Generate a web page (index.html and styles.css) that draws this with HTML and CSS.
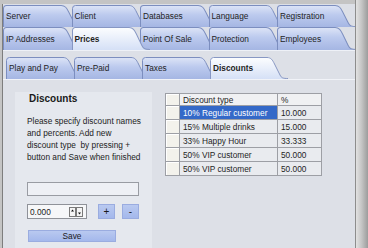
FILE: index.html
```html
<!DOCTYPE html>
<html>
<head>
<meta charset="utf-8">
<title>Prices - Discounts</title>
<link rel="stylesheet" href="styles.css">
</head>
<body>
<div class="win">
  <div class="frame">
    <div class="tabrow r1">
      <div class="tab">Server</div>
      <div class="tab">Client</div>
      <div class="tab">Databases</div>
      <div class="tab">Language</div>
      <div class="tab">Registration</div>
    </div>
    <div class="tabrow r2">
      <div class="tab">IP Addresses</div>
      <div class="tab sel">Prices</div>
      <div class="tab">Point Of Sale</div>
      <div class="tab">Protection</div>
      <div class="tab">Employees</div>
    </div>
    <div class="page">
      <div class="tabrow sub">
        <div class="tab">Play and Pay</div>
        <div class="tab">Pre-Paid</div>
        <div class="tab">Taxes</div>
        <div class="tab sel">Discounts</div>
      </div>
      <div class="inner">
        <div class="panel">
          <div class="ptitle">Discounts</div>
          <p class="desc">Please specify discount names<br>and percents. Add new<br>discount type&nbsp; by pressing +<br>button and Save when finished</p>
          <div class="field"></div>
          <div class="ctrls">
            <div class="spin">
              <span class="val">0.000</span>
              <span class="arrows">
                <svg width="15" height="10" viewBox="0 0 15 10"><rect x="0.5" y="0.5" width="6" height="9" fill="#f4f4f4" stroke="#7a7a7a"/><rect x="7.5" y="0.5" width="6" height="9" fill="#f4f4f4" stroke="#7a7a7a"/><path d="M2 4.5h3L3.5 2.5z" fill="#111"/><path d="M9 5.5h3L10.5 7.5z" fill="#111"/></svg>
              </span>
            </div>
            <div class="btn sq plus">+</div>
            <div class="btn sq minus">-</div>
          </div>
          <div class="btn save">Save</div>
        </div>
        <table class="grid">
          <colgroup><col class="c0"><col class="c1"><col class="c2"></colgroup>
          <thead>
            <tr><th class="rh"></th><th>Discount type</th><th>%</th></tr>
          </thead>
          <tbody>
            <tr><td class="rh"></td><td class="selcell">10% Regular customer</td><td>10.000</td></tr>
            <tr><td class="rh"></td><td>15% Multiple drinks</td><td>15.000</td></tr>
            <tr><td class="rh"></td><td>33% Happy Hour</td><td>33.333</td></tr>
            <tr><td class="rh"></td><td>50% VIP customer</td><td>50.000</td></tr>
            <tr><td class="rh"></td><td>50% VIP customer</td><td>50.000</td></tr>
          </tbody>
        </table>
      </div>
    </div>
  </div>
  <div class="edge"></div>
</div>
</body>
</html>
```
FILE: styles.css
```css
* { box-sizing: border-box; }
html, body { margin: 0; padding: 0; }
body {
  width: 368px;
  height: 248px;
  overflow: hidden;
  font-family: "Liberation Sans", Arial, sans-serif;
  font-size: 8.3px;
  color: #1c1c1c;
  background: #c4c4c4;
}
.win { display: flex; height: 248px; }
.frame {
  flex: 1;
  min-width: 0;
  margin: 4px 0 0 2px;
  border-left: 1px solid #7d7d7d;
  background: #dcdfe6;
  display: flex;
  flex-direction: column;
}
.edge {
  width: 13px;
  border-left: 1px solid #8d8d8d;
  background: linear-gradient(90deg, #e2e2e2, #c6c6c6 45%, #9c9c9c);
}
.tabrow { display: flex; height: 22px; flex: none; }
.r1 { margin-top: 1px; }
.r2 { height: 23px; }
.tab {
  flex: none;
  width: 80.5px;
  margin-right: -12px;
  padding-left: 3px;
  display: flex;
  align-items: center;
  white-space: nowrap;
  color: #1e1e1e;
  background: url("data:image/svg+xml,<svg xmlns='http://www.w3.org/2000/svg' viewBox='0 0 80 22' preserveAspectRatio='none'><defs><linearGradient id='g' x1='0' y1='0' x2='0' y2='1'><stop offset='0' stop-color='%23dfe6f7'/><stop offset='0.45' stop-color='%23bccaee'/><stop offset='1' stop-color='%23a5b6e3'/></linearGradient></defs><path d='M0 22V3.5Q0 0 3.5 0H57C61 0 62.5 3 64.5 7L70 18C71.5 21 73 22 78 22Z' fill='url(%23g)'/><path d='M0.5 22V3.5Q0.5 0.5 3.5 0.5H57C61 0.5 62.5 3 64.5 7L70 18C71.5 21 73 21.5 78 21.5' fill='none' stroke='%237c8ebf'/></svg>") 0 0 / 100% 100% no-repeat;
}
.tab.sel {
  z-index: 1;
  font-weight: bold;
  background-image: url("data:image/svg+xml,<svg xmlns='http://www.w3.org/2000/svg' viewBox='0 0 80 22' preserveAspectRatio='none'><defs><linearGradient id='g' x1='0' y1='0' x2='0' y2='1'><stop offset='0' stop-color='%23fdfeff'/><stop offset='1' stop-color='%23d5e0f6'/></linearGradient></defs><path d='M0 22V3.5Q0 0 3.5 0H57C61 0 62.5 3 64.5 7L70 18C71.5 21 73 22 78 22Z' fill='url(%23g)'/><path d='M0.5 22V3.5Q0.5 0.5 3.5 0.5H57C61 0.5 62.5 3 64.5 7L70 18C71.5 21 73 21.5 78 21.5' fill='none' stroke='%238797c3'/></svg>");
}
.page {
  flex: 1;
  display: flex;
  flex-direction: column;
  background: #dde0e7;
  border-top: 1px solid #eef1f7;
  padding-top: 6px;
}
.sub { margin-left: 3px; }
.sub .tab { width: 80px; }
.inner {
  flex: 1;
  display: flex;
  align-items: flex-start;
  border-top: 1px solid #f1f3f8;
  padding: 12px 0 0 12px;
}
.panel {
  width: 137px;
  height: 160px;
  flex: none;
  background: #e5e8ee;
  padding-left: 12px;
}
.ptitle {
  font-weight: bold;
  font-size: 10px;
  line-height: 14px;
  padding-left: 2px;
  color: #1a1a1a;
}
.desc {
  margin: 9px 0 0;
  line-height: 12px;
  color: #222;
}
.field {
  margin-top: 19px;
  width: 112px;
  height: 14px;
  border: 1px solid #999ca3;
  background: #eef0f5;
}
.ctrls {
  display: flex;
  margin-top: 8px;
  height: 15px;
}
.spin {
  width: 60px;
  border: 1px solid #8f9299;
  background: #f6f7f9;
  display: flex;
  align-items: center;
  justify-content: space-between;
  padding: 0 2px 0 2px;
}
.arrows { display: flex; }
.btn {
  display: flex;
  align-items: center;
  justify-content: center;
  border: 1px solid #9aace0;
  background: linear-gradient(#b9c9f0, #a4b8ec);
  color: #1a1a1a;
}
.sq { width: 17px; font-size: 10px; }
.plus { margin-left: 11px; }
.minus { margin-left: 7px; }
.save {
  margin: 11px 0 0 1px;
  width: 88px;
  height: 12px;
  font-size: 8.3px;
}
.grid {
  margin: 1px 0 0 13px;
  border-collapse: collapse;
  table-layout: fixed;
  width: 156px;
}
.c0 { width: 14px; }
.c1 { width: 98px; }
.c2 { width: 44px; }
.grid th, .grid td {
  border: 1px solid #9d9fa5;
  padding: 0 0 0 3px;
  text-align: left;
  font-weight: normal;
  white-space: nowrap;
  overflow: hidden;
  color: #1e1e1e;
}
.grid th { height: 12px; background: #f0f1f3; }
.grid td { height: 14px; background: #e9ebef; }
.grid .rh {
  background: #f3f2ec;
  border-color: #9d9fa5;
  box-shadow: inset 1px 1px 0 #ffffff;
}
.grid td.selcell { background: #3469c8; color: #ffffff; }
```
